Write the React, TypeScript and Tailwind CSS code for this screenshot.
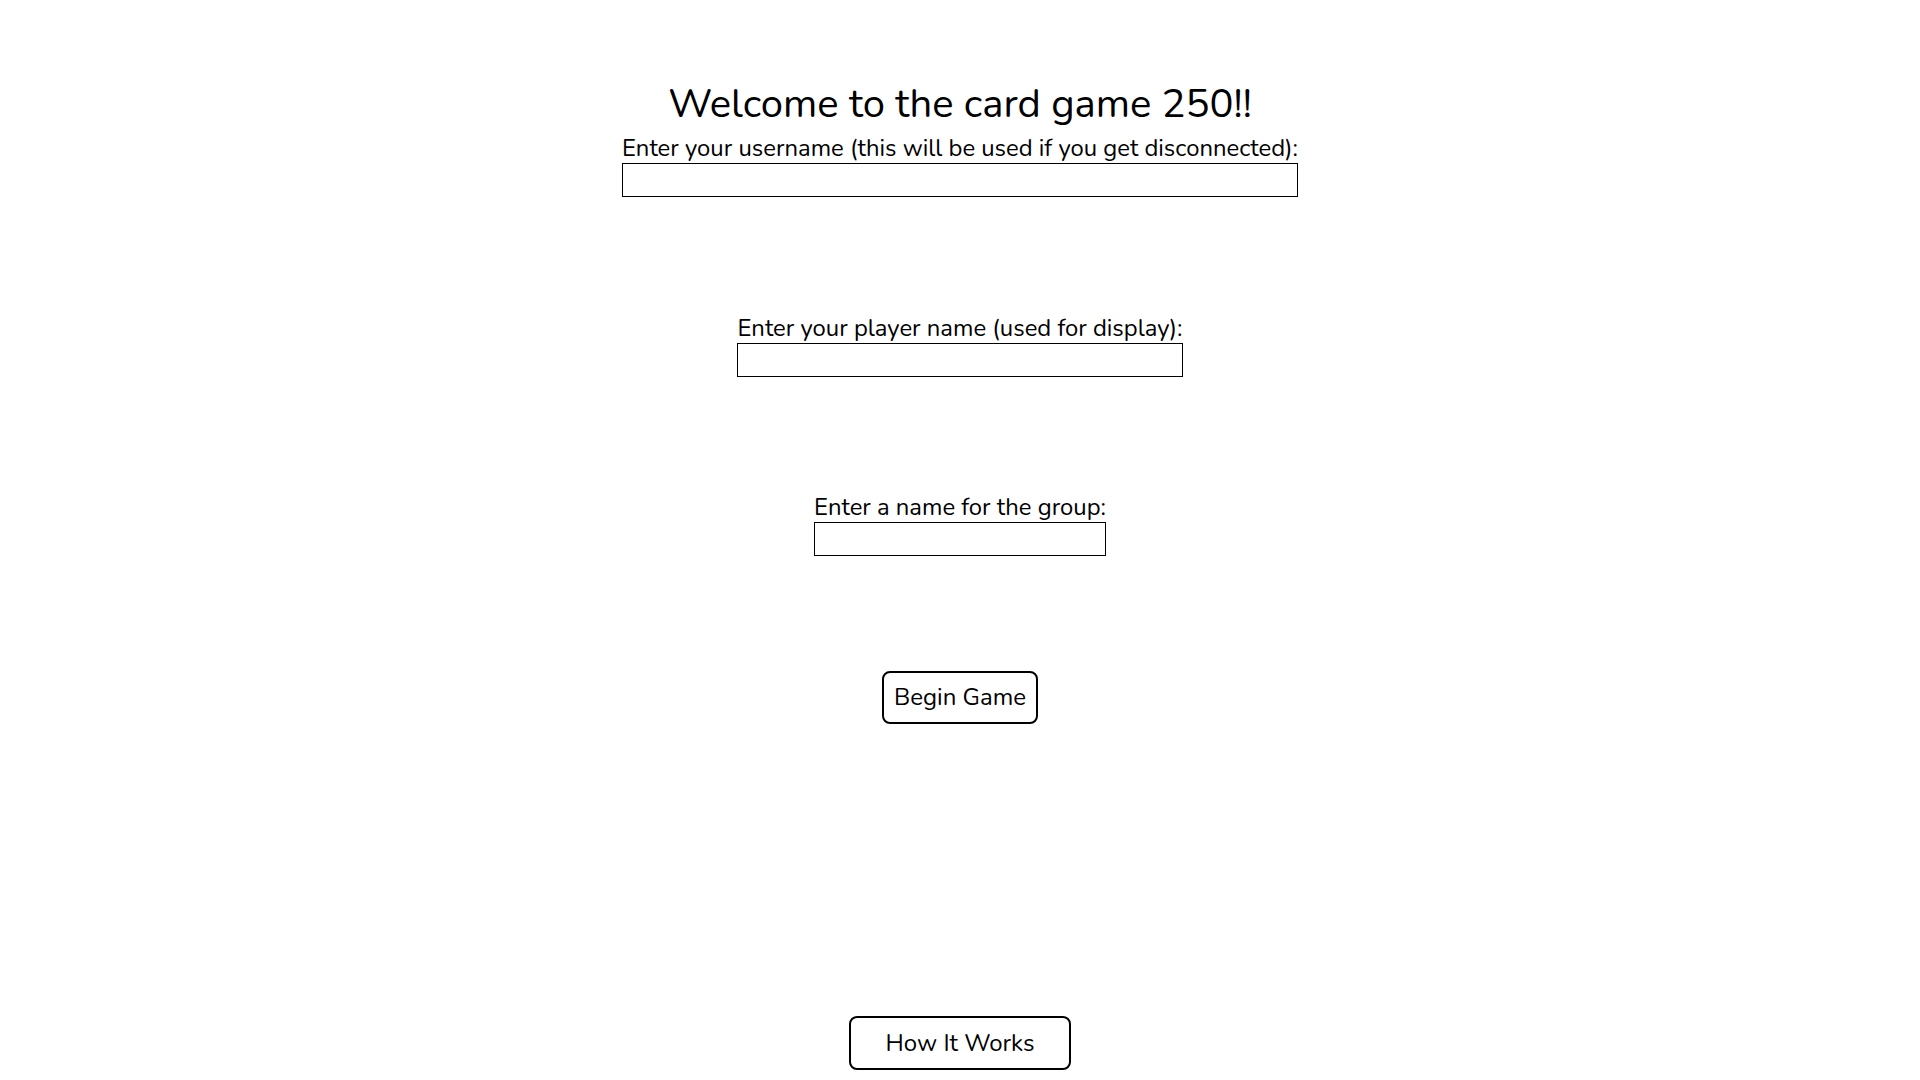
export default function App() {
  return (
    <div className="min-h-screen bg-white text-black flex flex-col items-center text-center font-['Nunito','Lato',sans-serif]">
      {/* Title */}
      <h1 className="mt-[80px] text-[40px] leading-[48px] font-normal">Welcome to the card game 250!!</h1>

      {/* Username */}
      <div className="mt-[6px] inline-flex flex-col">
        <label className="text-[23.85px] leading-[28px]">Enter your username (this will be used if you get disconnected):</label>
        <input type="text" className="mt-[1px] w-full h-[34px] border border-black bg-white outline-none" />
      </div>

      {/* Player name */}
      <div className="mt-[117px] inline-flex flex-col">
        <label className="text-[23.85px] leading-[28px]">Enter your player name (used for display):</label>
        <input type="text" className="mt-[1px] w-full h-[34px] border border-black bg-white outline-none" />
      </div>

      {/* Group */}
      <div className="mt-[116px] inline-flex flex-col">
        <label className="text-[23.85px] leading-[28px]">Enter a name for the group:</label>
        <input type="text" className="mt-[1px] w-full h-[34px] border border-black bg-white outline-none" />
      </div>

      <button className="mt-[115px] h-[53px] px-[10px] text-[24px] leading-[29px] border-2 border-black rounded-lg bg-white">
        Begin Game
      </button>

      <button className="mt-[292px] mb-10 w-[222px] h-[54px] text-[24px] leading-[30px] border-2 border-black rounded-lg bg-white">
        How It Works
      </button>
    </div>
  );
}
